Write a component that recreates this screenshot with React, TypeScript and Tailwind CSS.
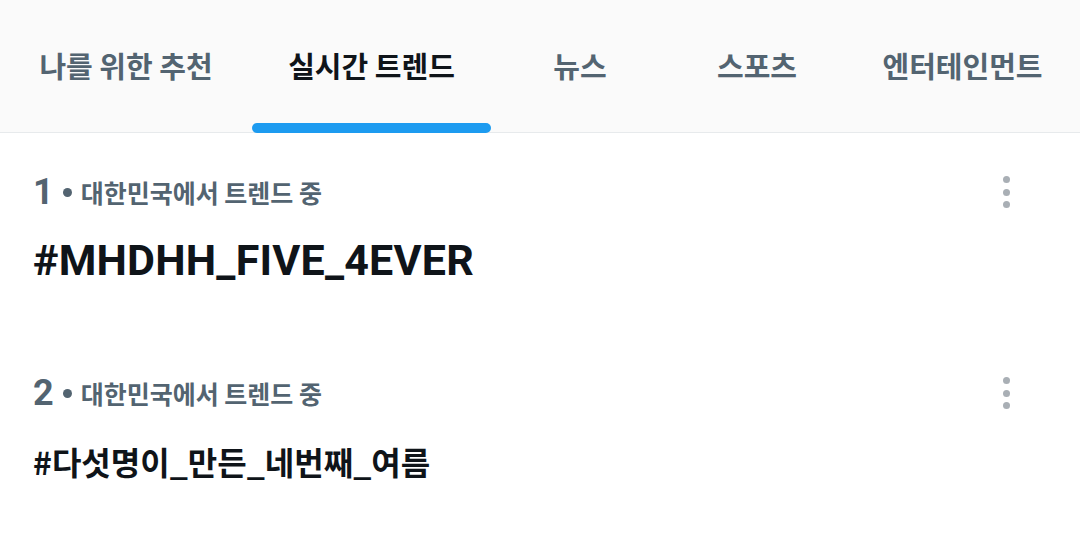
import React from "react";

const tabs = [
  { label: "나를 위한 추천", w: "w-[252px]", active: false },
  { label: "실시간 트렌드", w: "w-[239px]", active: true },
  { label: "뉴스", w: "w-[178px]", active: false },
  { label: "스포츠", w: "w-[176px]", active: false },
  { label: "엔터테인먼트", w: "flex-1", active: false },
];

const kr = { fontFamily: '"Noto Sans CJK KR", "Noto Sans", sans-serif' };
const ro = { fontFamily: 'Roboto, "Noto Sans CJK KR", sans-serif' };

function Dots() {
  return (
    <div className="flex w-[24px] flex-col items-center gap-[5.5px]">
      <span className="h-[7px] w-[7px] rounded-full bg-[#a9afb5]" />
      <span className="h-[7px] w-[7px] rounded-full bg-[#a9afb5]" />
      <span className="h-[7px] w-[7px] rounded-full bg-[#a9afb5]" />
    </div>
  );
}

function Trend({ rank, tag, korean }: { rank: string; tag: string; korean?: boolean }) {
  return (
    <div className="flex h-[201px] flex-col pl-[33px] pr-[62px] pt-[39px]">
      <div className="flex h-[40px] items-center justify-between">
        <div className="flex items-center text-[#536471]">
          <span className="text-[36px] font-bold leading-none" style={ro}>
            {rank}
          </span>
          <span className="ml-[9px] mr-[9px] h-[9px] w-[9px] rounded-full bg-[#536471]" />
          <span className="text-[25px] font-bold leading-none" style={kr}>
            대한민국에서 트렌드 중
          </span>
        </div>
        <Dots />
      </div>
      <div className="mt-[23px] flex h-[50px] items-center">
        {korean ? (
          <span className="text-[32px] font-bold leading-none text-[#0f1419]" style={kr}>
            {tag}
          </span>
        ) : (
          <span className="text-[43px] font-bold leading-none tracking-[0.2px] text-[#0f1419]" style={ro}>
            {tag}
          </span>
        )}
      </div>
    </div>
  );
}

export default function App() {
  return (
    <div className="h-[552px] w-[1080px] overflow-hidden bg-white">
      <div className="flex h-[133px] border-b border-[#e7eaec] bg-[#fafafa]">
        {tabs.map((t) => (
          <div key={t.label} className={`relative flex h-full flex-col items-center ${t.w}`}>
            <div className="flex flex-1 items-center justify-center pb-[2px]">
              <span
                className={`whitespace-nowrap text-[29px] font-bold leading-none ${
                  t.active ? "text-[#0f1419]" : "text-[#536471]"
                }`}
                style={kr}
              >
                {t.label}
              </span>
            </div>
            {t.active && (
              <div className="absolute bottom-[-1px] left-0 right-0 h-[10px] rounded-full bg-[#1d9bf0]" />
            )}
          </div>
        ))}
      </div>
      <Trend rank="1" tag="#MHDHH_FIVE_4EVER" />
      <Trend rank="2" tag="#다섯명이_만든_네번째_여름" korean />
    </div>
  );
}
